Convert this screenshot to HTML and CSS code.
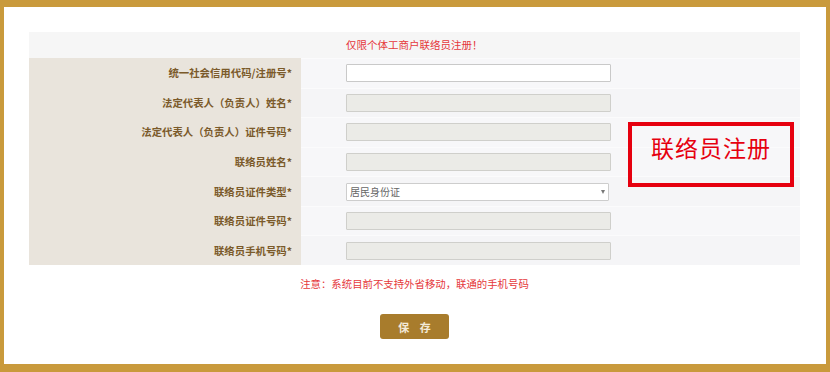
FILE: index.html
```html
<!DOCTYPE html>
<html lang="zh-CN">
<head>
<meta charset="utf-8">
<title>联络员注册</title>
<link rel="stylesheet" href="styles.css">
</head>
<body>
<div class="frame">
  <div class="form-table">
    <div class="cell head-label"></div>
    <div class="cell head-value"><span class="tip">仅限个体工商户联络员注册！</span></div>

    <div class="cell label">统一社会信用代码/注册号*</div>
    <div class="cell value"><input class="field" type="text"></div>

    <div class="cell label">法定代表人（负责人）姓名*</div>
    <div class="cell value alt"><input class="field disabled" type="text" disabled></div>

    <div class="cell label">法定代表人（负责人）证件号码*</div>
    <div class="cell value"><input class="field disabled" type="text" disabled></div>

    <div class="cell label">联络员姓名*</div>
    <div class="cell value"><input class="field disabled" type="text" disabled></div>

    <div class="cell label">联络员证件类型*</div>
    <div class="cell value alt">
      <div class="select-wrap">
        <select class="select"><option>居民身份证</option></select>
        <span class="arrow"></span>
      </div>
    </div>

    <div class="cell label">联络员证件号码*</div>
    <div class="cell value"><input class="field disabled" type="text" disabled></div>

    <div class="cell label">联络员手机号码*</div>
    <div class="cell value alt"><input class="field disabled" type="text" disabled></div>

    <div class="annot">联络员注册</div>
  </div>

  <p class="notice">注意：系统目前不支持外省移动，联通的手机号码</p>

  <div class="actions"><button class="save" type="button">保 存</button></div>
</div>
</body>
</html>
```

FILE: styles.css
```css
* { box-sizing: border-box; }
html, body { margin: 0; padding: 0; background: #ffffff; }
body { font-family: "Noto Sans CJK SC", "Noto Sans", sans-serif; }

.frame {
  width: 830px;
  height: 372px;
  border-style: solid;
  border-color: #c99a3c;
  border-width: 7px 4px 8px 4px;
  padding: 25px 26px 0 25px;
  background: #ffffff;
}

.form-table {
  position: relative;
  display: grid;
  grid-template-columns: 272px 499px;
  grid-template-rows: 26px repeat(7, 1fr);
  height: 233px;
}

.cell { display: flex; align-items: center; }

.head-label { background: #f6f6f6; }
.head-value { background: #f6f6f6; padding-left: 45px; }
.tip { color: #e5383b; font-size: 10.5px; line-height: 1; }

.label {
  background: #e9e4dc;
  justify-content: flex-end;
  padding-right: 9px;
  color: #7b5a2a;
  font-size: 10.4px;
  font-weight: 700;
  white-space: nowrap;
}

.value {
  background: #f7f7f9;
  padding-left: 45px;
  border-top: 1px solid #fbfbfc;
}
.value.alt { background: #f5f5f7; }

.field {
  display: block;
  width: 265px;
  height: 18px;
  margin: 0;
  padding: 0 4px;
  border: 1px solid #c9c9c9;
  border-radius: 1px;
  background: #ffffff;
  font-family: inherit;
  font-size: 10px;
}
.field.disabled { background: #ebebe7; border-color: #cfcfcb; }

.select-wrap { position: relative; width: 263px; height: 18px; }
.select {
  display: block;
  appearance: none;
  -webkit-appearance: none;
  width: 100%;
  height: 18px;
  margin: 0;
  padding: 0 0 0 3px;
  border: 1px solid #cdcdcd;
  border-radius: 1px;
  background: #ffffff;
  color: #666666;
  font-family: inherit;
  font-size: 10px;
  line-height: 16px;
}
.arrow {
  position: absolute;
  right: 4px;
  top: 7px;
  width: 0;
  height: 0;
  border-left: 2.5px solid transparent;
  border-right: 2.5px solid transparent;
  border-top: 4px solid #777777;
}

.annot {
  position: absolute;
  left: 599px;
  top: 90px;
  width: 166px;
  height: 65px;
  border: 4px solid #e6000f;
  color: #e6000f;
  font-size: 23px;
  line-height: 1;
  text-align: center;
  padding-top: 10px;
  letter-spacing: 1px;
  background: transparent;
}

.notice {
  margin: 12px 0 0 0;
  text-align: center;
  color: #e5383b;
  font-size: 10.4px;
  line-height: 14px;
}

.actions { display: flex; justify-content: center; margin-top: 23px; }
.save {
  width: 69px;
  height: 25px;
  border: none;
  border-radius: 3px;
  background: #a87c2c;
  color: #f3ead8;
  font-family: inherit;
  font-size: 11px;
  font-weight: 700;
  letter-spacing: 4px;
  padding: 0 0 0 4px;
}
```
